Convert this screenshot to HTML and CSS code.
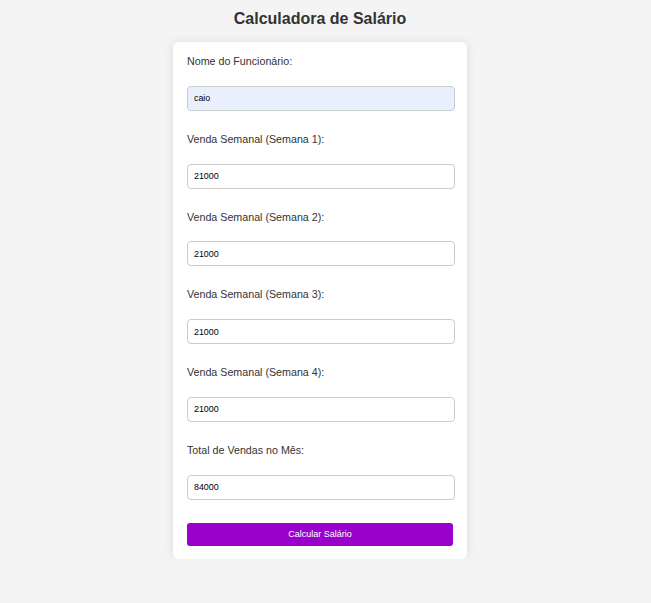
FILE: index.html
```html
<!DOCTYPE html>
<html lang="pt">
<head>
<meta charset="utf-8">
<title>Calculadora de Salário</title>
<link rel="stylesheet" href="styles.css">
</head>
<body>
<div class="page">
  <h1 class="title">Calculadora de Salário</h1>
  <form class="card">
    <label class="field-label" for="nome">Nome do Funcionário:</label>
    <input class="field-input field-input--filled" id="nome" type="text" value="caio">
    <label class="field-label" for="s1">Venda Semanal (Semana 1):</label>
    <input class="field-input" id="s1" type="text" value="21000">
    <label class="field-label" for="s2">Venda Semanal (Semana 2):</label>
    <input class="field-input" id="s2" type="text" value="21000">
    <label class="field-label" for="s3">Venda Semanal (Semana 3):</label>
    <input class="field-input" id="s3" type="text" value="21000">
    <label class="field-label" for="s4">Venda Semanal (Semana 4):</label>
    <input class="field-input" id="s4" type="text" value="21000">
    <label class="field-label" for="total">Total de Vendas no Mês:</label>
    <input class="field-input" id="total" type="text" value="84000">
    <button class="submit" type="button">Calcular Salário</button>
  </form>
</div>
</body>
</html>
```
FILE: styles.css
```css
html, body {
  margin: 0;
  padding: 0;
  background: #f4f4f4;
}
body {
  font-family: "Liberation Sans", Arial, sans-serif;
  color: #333;
}
.page {
  width: 640px;
  display: flex;
  flex-direction: column;
  align-items: center;
}
.title {
  margin: 8px 0 12px;
  font-size: 16px;
  line-height: 22px;
  font-weight: bold;
  color: #333;
}
.card {
  width: 266px;
  padding: 12px 14px 13px;
  background: #fff;
  border-radius: 6px;
  box-shadow: 0 0 10px rgba(0, 0, 0, 0.1);
  display: flex;
  flex-direction: column;
}
.field-label {
  display: block;
  font-size: 10.7px;
  line-height: 14px;
  margin-bottom: 17.8px;
  color: #333;
}
.field-input {
  box-sizing: border-box;
  width: 268px;
  height: 25px;
  margin: 0 0 21px;
  padding: 0 6px;
  border: 1px solid #ccc;
  border-radius: 4px;
  background: #fff;
  font-family: "Liberation Sans", Arial, sans-serif;
  font-size: 8.9px;
  color: #000;
}
.field-input--filled {
  background: #e8f0fe;
}
.submit {
  margin-top: 2px;
  width: 266px;
  height: 23px;
  border: none;
  border-radius: 3px;
  background: #9900cc;
  color: #fff;
  font-family: "Liberation Sans", Arial, sans-serif;
  font-size: 9px;
  padding: 0;
}
```
